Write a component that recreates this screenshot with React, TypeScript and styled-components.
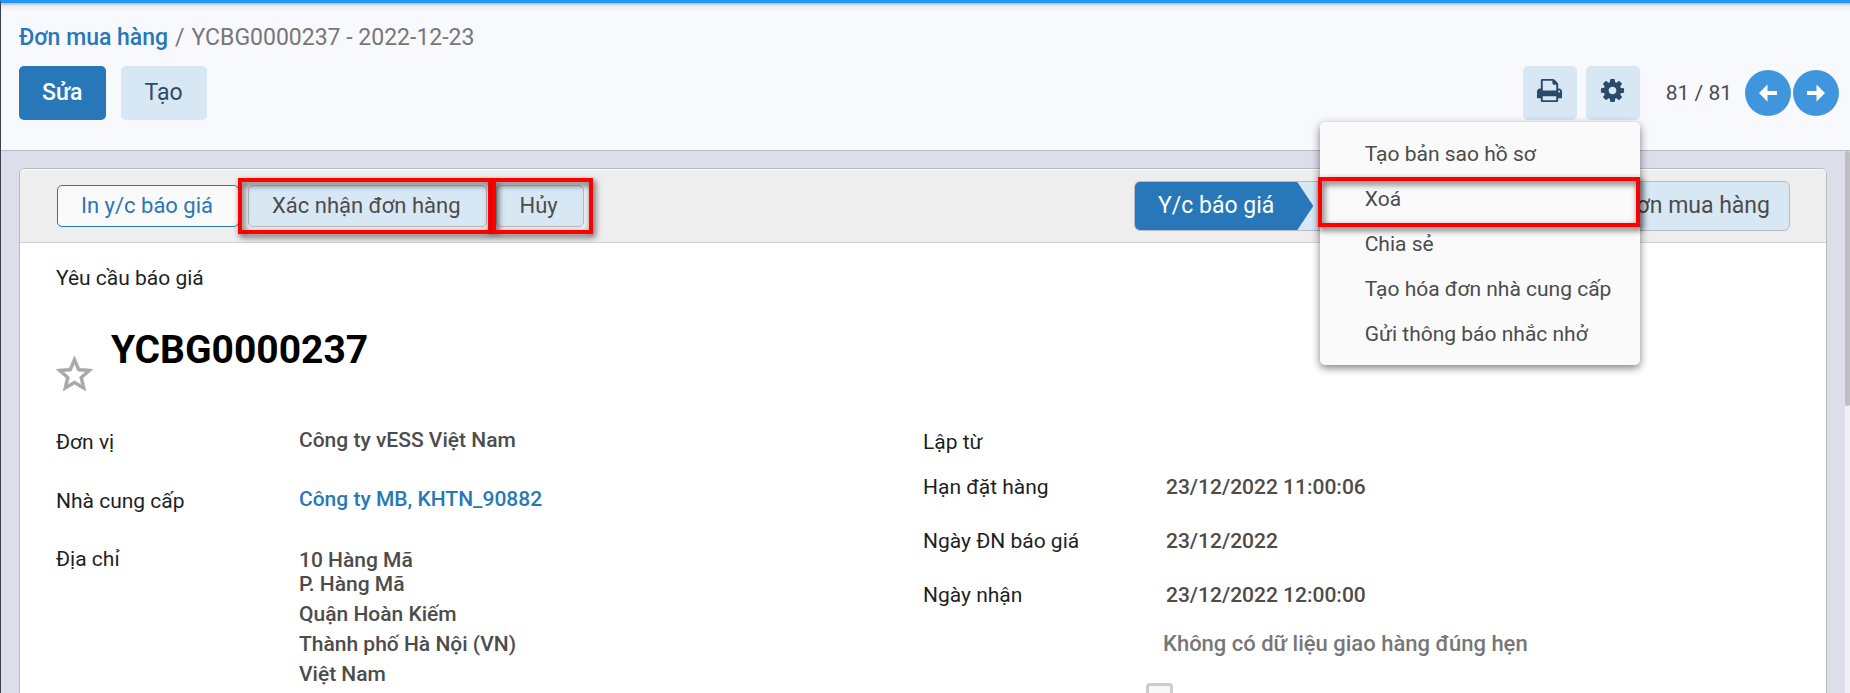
import React from 'react';
import styled, { createGlobalStyle, css } from 'styled-components';

const GlobalStyle = createGlobalStyle`
  *, *::before, *::after { box-sizing: border-box; }
  body {
    margin: 0;
    font-family: Roboto, "Liberation Sans", sans-serif;
    font-size: 21px;
    line-height: 24px;
    color: #4c4c4c;
    background: #dcdeea;
  }
  button { font-family: inherit; cursor: pointer; }
  a { color: #2877b8; text-decoration: none; }
`;

const Screen = styled.div`
  display: flex;
  flex-direction: column;
  height: 100vh;
  overflow: hidden;
  border-left: 1px solid #38404f;
  border-top: 3px solid #2196f3;
`;

const ControlPanel = styled.header`
  display: flex;
  flex-direction: column;
  flex: none;
  gap: 12px;
  padding: 18px 11px 30px 18px;
  background: linear-gradient(#b5b8bf, #e9ebef 3px, #f8f9fd 8px);
  border-bottom: 1px solid #b9bbc6;
`;

const Breadcrumb = styled.nav`
  display: flex;
  gap: 7px;
  font-size: 23px;
  line-height: 33px;
  color: #777;

  a { font-weight: 500; }
`;

const PanelRow = styled.div`
  display: flex;
  justify-content: space-between;
  align-items: center;
`;

const ButtonGroup = styled.div<{ $gap: number }>`
  display: flex;
  align-items: center;
  gap: ${(p) => p.$gap}px;
`;

const PanelButton = styled.button<{ $primary?: boolean }>`
  height: 54px;
  padding: 0 24px 1px 23px;
  border: 0;
  border-radius: 5px;
  font-size: 23px;
  font-weight: ${(p) => (p.$primary ? 500 : 400)};
  color: ${(p) => (p.$primary ? '#fff' : '#2f4b66')};
  background: ${(p) => (p.$primary ? '#2877b8' : '#d8e7f4')};
`;

const IconButton = styled.button`
  display: flex;
  align-items: center;
  justify-content: center;
  width: 54px;
  height: 54px;
  padding: 0 0 5px;
  border: 0;
  border-radius: 5px;
  color: #2b4a68;
  background: #d8e7f4;
`;

const Pager = styled.div`
  display: flex;
  align-items: center;
  gap: 2px;
  margin-left: 17px;

  span { margin-right: 11px; }
`;

const PagerButton = styled.button`
  display: flex;
  align-items: center;
  justify-content: center;
  width: 46px;
  height: 46px;
  padding: 0;
  border: 0;
  border-radius: 50%;
  color: #fff;
  background: #4096dc;
`;

const MenuAnchor = styled.div`
  position: relative;
`;

const Menu = styled.ul`
  position: absolute;
  top: 56px;
  right: 0;
  z-index: 10;
  width: 320px;
  margin: 0;
  padding: 9px 0;
  list-style: none;
  background: #fafafa;
  border-radius: 5px;
  box-shadow: 0 3px 8px rgba(0, 0, 0, 0.5);
`;

const MenuItem = styled.button`
  display: block;
  width: 100%;
  height: 45px;
  padding: 0 0 0 45px;
  border: 0;
  background: none;
  font-size: 21px;
  text-align: left;
  white-space: nowrap;
  color: #4c4c4c;
`;

const redFrame = css`
  content: '';
  position: absolute;
  z-index: 2;
  border: 4px solid #fe0000;
  filter: drop-shadow(2px 3px 3px rgba(0, 0, 0, 0.7));
  pointer-events: none;
`;

const MarkedItem = styled.li`
  position: relative;
  &::after { ${redFrame} inset: 1px 0 -6px -2px; }
`;

const Marked = styled.div<{ $left: number; $right: number }>`
  position: relative;
  &::after {
    ${redFrame}
    inset: -7px ${(p) => -p.$right}px -7px ${(p) => -p.$left}px;
  }
`;

const Body = styled.main`
  display: flex;
  flex: 1;
  min-height: 0;
  overflow: hidden;
`;

const Sheet = styled.section`
  flex: 1;
  height: max-content;
  min-height: 100%;
  margin: 17px 18px 0;
  background: #fff;
  border: 1px solid #b9bac0;
  border-radius: 6px;
`;

const ScrollTrack = styled.div`
  width: 5px;
  background: #f0f0f0;
`;

const ScrollThumb = styled.div`
  height: 47%;
  border-radius: 2px;
  background: #bfbfbf;
`;

const StatusHeader = styled.div`
  display: flex;
  justify-content: space-between;
  align-items: center;
  height: 74px;
  padding: 0 36px 0 37px;
  background: #eee;
  border-top: 1px solid #fff;
  border-bottom: 1px solid #cdd2dc;
  border-radius: 5px 5px 0 0;
`;

const ActionButton = styled.button<{ $outline?: boolean }>`
  height: 42px;
  padding: 0 25px 0 23px;
  border: 1px solid ${(p) => (p.$outline ? '#2877b8' : '#b5bac0')};
  border-radius: 5px;
  font-size: 22px;
  line-height: 24px;
  white-space: nowrap;
  color: ${(p) => (p.$outline ? '#2877b8' : '#4c4c4c')};
  background: ${(p) => (p.$outline ? '#fafafa' : '#d8e7f4')};
`;

const StatusBar = styled.div`
  display: flex;
  justify-content: space-between;
  width: 656px;
  height: 50px;
  overflow: hidden;
  border: 1px solid #b9bcc0;
  border-radius: 6px;
  background: #d8e7f4;
`;

const StatusStep = styled.button<{ $active?: boolean }>`
  padding: 0 ${(p) => (p.$active ? 39 : 19)}px 2px 23px;
  border: 0;
  font-size: 23px;
  white-space: nowrap;
  font-weight: 400;
  color: ${(p) => (p.$active ? '#fff' : '#4c4c4c')};
  background: ${(p) => (p.$active ? '#2877b8' : 'none')};
  clip-path: ${(p) =>
    p.$active ? 'polygon(0 0, calc(100% - 16px) 0, 100% 50%, calc(100% - 16px) 100%, 0 100%)' : 'none'};
`;

const Content = styled.div`
  padding: 23px 36px 40px;
  color: #1f1f1f;
`;

const Caption = styled.div`
  line-height: 24px;
`;

const TitleRow = styled.div`
  display: flex;
  align-items: flex-end;
  gap: 18px;
  margin: 37px 0 39px;
`;

const StarButton = styled.button`
  display: flex;
  padding: 0;
  border: 0;
  background: none;
  color: #a8a8a8;
`;

const Title = styled.h1`
  margin: 0;
  padding-bottom: 18px;
  font-size: 39px;
  line-height: 46px;
  font-weight: 700;
  color: #000;
`;

const Columns = styled.div`
  display: grid;
  grid-template-columns: 1fr 1fr;
`;

const Field = styled.div<{ $height: number }>`
  display: grid;
  grid-template-columns: 243px 1fr;
  min-height: ${(p) => p.$height}px;
`;

const Value = styled.div<{ $raised?: boolean }>`
  line-height: ${(p) => (p.$raised ? 20 : 24)}px;
  font-weight: 500;
  color: #4c4c4c;
`;

const Address = styled(Value)`
  padding-top: 1px;

  p { margin: 0; }
  p + p + p { line-height: 30px; }
  p:nth-child(3) { margin-top: 3px; }
`;

const Note = styled(Value)`
  margin-left: -3px;
  font-size: 22px;
  color: #777;
`;

const CheckBox = styled.input`
  appearance: none;
  display: block;
  width: 27px;
  height: 27px;
  margin: 0 0 0 223px;
  border: 3px solid #ccc;
  border-radius: 4px;
  background: #f8f8f8;
`;

const PrintIcon = () => (
  <svg width="27" height="27" viewBox="0 0 1792 1792" fill="currentColor" aria-hidden="true">
    <path d="M448 1536h896v-256h-896v256zm0-640h896v-384h-160q-40 0-68-28t-28-68v-160h-640v640zm1152 64q0-26-19-45t-45-19-45 19-19 45 19 45 45 19 45-19 19-45zm128 0v416q0 13-9.5 22.5t-22.5 9.5h-224v160q0 40-28 68t-68 28h-960q-40 0-68-28t-28-68v-160h-224q-13 0-22.5-9.5t-9.500-22.500v-416q0-79 56.500-135.500t135.500-56.500h64v-544q0-40 28-68t68-28h672q40 0 88 20t76 48l152 152q28 28 48 76t20 88v256h64q79 0 135.500 56.500t56.500 135.500z" />
  </svg>
);

const CogIcon = () => (
  <svg width="27" height="27" viewBox="0 0 1792 1792" fill="currentColor" aria-hidden="true">
    <path d="M1152 896q0-106-75-181t-181-75-181 75-75 181 75 181 181 75 181-75 75-181zm512-109v222q0 12-8 23t-20 13l-185 28q-19 54-39 91 35 50 107 138 10 12 10 25t-9 23q-27 37-99 108t-94 71q-12 0-26-9l-138-108q-44 23-91 38-16 136-29 186-7 28-36 28h-222q-14 0-24.500-8.500t-11.500-21.500l-28-184q-49-16-90-37l-141 107q-10 9-25 9-14 0-25-11-126-114-165-168-7-10-7-23 0-12 8-23 15-21 51-66.500t54-70.500q-27-50-41-99l-183-27q-13-2-21-12.500t-8-23.500v-222q0-12 8-23t19-13l186-28q14-46 39-92-40-57-107-138-10-12-10-24 0-10 9-23 26-36 98.500-107.500t94.500-71.500q13 0 26 10l138 107q44-23 91-38 16-136 29-186 7-28 36-28h222q14 0 24.500 8.500t11.500 21.500l28 184q49 16 90 37l142-107q9-9 24-9 13 0 25 10 129 119 165 170 7 8 7 22 0 12-8 23-15 21-51 66.500t-54 70.500q26 50 41 98l183 28q13 2 21 12.500t8 23.500z" />
  </svg>
);

const ArrowIcon = ({ right }: { right?: boolean }) => (
  <svg width="18" height="18" viewBox="0 0 18 18" fill="currentColor" aria-hidden="true">
    <path d={right ? 'M18 9L9.500 0.500V7H0v4h9.500v6.500z' : 'M0 9L8.500 0.500V7H18v4H8.500v6.500z'} />
  </svg>
);

const StarIcon = () => (
  <svg
    width="37"
    height="35"
    viewBox="2 2 20 19"
    fill="currentColor"
    stroke="currentColor"
    strokeWidth="0.3"
    aria-hidden="true"
  >
    <path d="M22 9.240l-7.190-.620L12 2 9.190 8.630 2 9.240l5.460 4.730L5.820 21 12 17.270 18.180 21l-1.630-7.030L22 9.240zM12 15.400l-3.760 2.270 1-4.280-3.320-2.880 4.380-.380L12 6.100l1.710 4.040 4.380.380-3.320 2.880 1 4.280L12 15.400z" />
  </svg>
);

export default function App() {
  return (
    <>
      <GlobalStyle />
      <Screen>
        <ControlPanel>
          <Breadcrumb>
            <a href="#orders">Đơn mua hàng</a>
            <span>/</span>
            <span>YCBG0000237 - 2022-12-23</span>
          </Breadcrumb>
          <PanelRow>
            <ButtonGroup $gap={15}>
              <PanelButton $primary>Sửa</PanelButton>
              <PanelButton>Tạo</PanelButton>
            </ButtonGroup>
            <ButtonGroup $gap={9}>
              <IconButton aria-label="In">
                <PrintIcon />
              </IconButton>
              <MenuAnchor>
                <IconButton aria-label="Hành động">
                  <CogIcon />
                </IconButton>
                <Menu>
                  <li><MenuItem>Tạo bản sao hồ sơ</MenuItem></li>
                  <MarkedItem><MenuItem>Xoá</MenuItem></MarkedItem>
                  <li><MenuItem>Chia sẻ</MenuItem></li>
                  <li><MenuItem>Tạo hóa đơn nhà cung cấp</MenuItem></li>
                  <li><MenuItem>Gửi thông báo nhắc nhở</MenuItem></li>
                </Menu>
              </MenuAnchor>
              <Pager>
                <span>81 / 81</span>
                <PagerButton aria-label="Trước"><ArrowIcon /></PagerButton>
                <PagerButton aria-label="Sau"><ArrowIcon right /></PagerButton>
              </Pager>
            </ButtonGroup>
          </PanelRow>
        </ControlPanel>
        <Body>
          <Sheet>
            <StatusHeader>
              <ButtonGroup $gap={9}>
                <ActionButton $outline>In y/c báo giá</ActionButton>
                <Marked $left={10} $right={5}>
                  <ActionButton>Xác nhận đơn hàng</ActionButton>
                </Marked>
                <Marked $left={4} $right={9}>
                  <ActionButton>Hủy</ActionButton>
                </Marked>
              </ButtonGroup>
              <StatusBar>
                <StatusStep $active>Y/c báo giá</StatusStep>
                <StatusStep>Đơn mua hàng</StatusStep>
              </StatusBar>
            </StatusHeader>
            <Content>
              <Caption>Yêu cầu báo giá</Caption>
              <TitleRow>
                <StarButton aria-label="Đánh dấu"><StarIcon /></StarButton>
                <Title>YCBG0000237</Title>
              </TitleRow>
              <Columns>
                <div>
                  <Field $height={59}>
                    <span>Đơn vị</span>
                    <Value $raised>Công ty vESS Việt Nam</Value>
                  </Field>
                  <Field $height={58}>
                    <span>Nhà cung cấp</span>
                    <Value $raised><a href="#vendor">Công ty MB, KHTN_90882</a></Value>
                  </Field>
                  <Field $height={58}>
                    <span>Địa chỉ</span>
                    <Address>
                      <p>10 Hàng Mã</p>
                      <p>P. Hàng Mã</p>
                      <p>Quận Hoàn Kiếm</p>
                      <p>Thành phố Hà Nội (VN)</p>
                      <p>Việt Nam</p>
                    </Address>
                  </Field>
                </div>
                <div>
                  <Field $height={45}><span>Lập từ</span></Field>
                  <Field $height={54}><span>Hạn đặt hàng</span><Value>23/12/2022 11:00:06</Value></Field>
                  <Field $height={54}><span>Ngày ĐN báo giá</span><Value>23/12/2022</Value></Field>
                  <Field $height={49}><span>Ngày nhận</span><Value>23/12/2022 12:00:00</Value></Field>
                  <Field $height={51}><span /><Note>Không có dữ liệu giao hàng đúng hẹn</Note></Field>
                  <CheckBox type="checkbox" aria-label="Yêu cầu xác nhận" />
                </div>
              </Columns>
            </Content>
          </Sheet>
          <ScrollTrack><ScrollThumb /></ScrollTrack>
        </Body>
      </Screen>
    </>
  );
}
